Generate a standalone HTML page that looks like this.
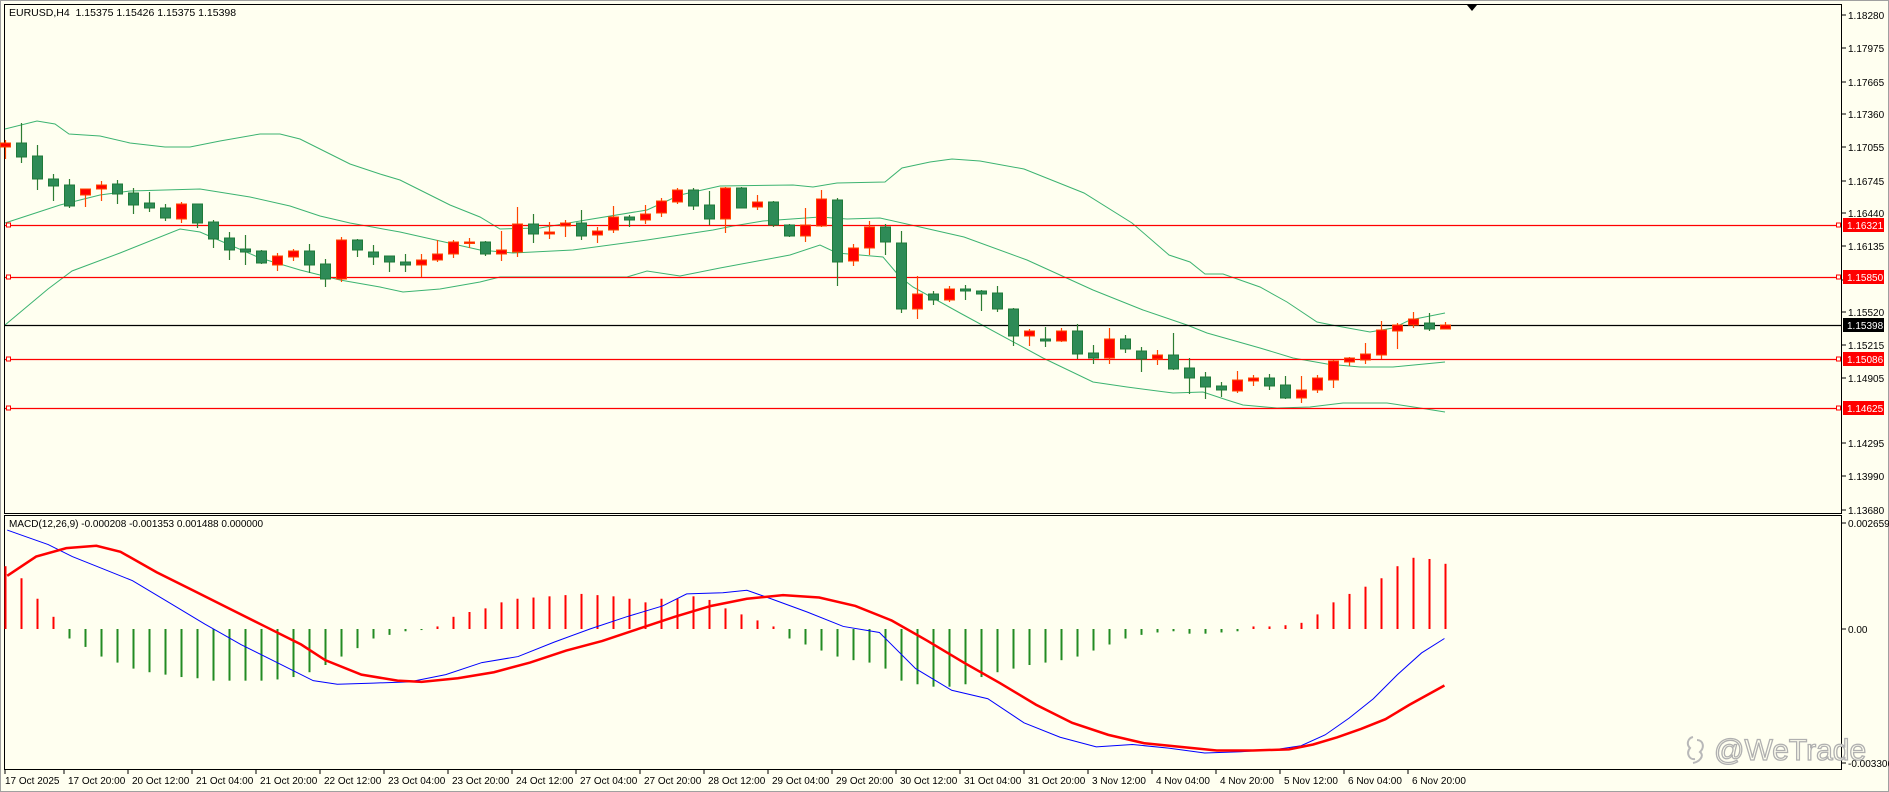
<!DOCTYPE html>
<html><head><meta charset="utf-8"><style>
html,body{margin:0;padding:0;background:#fffff0;}
svg{display:block;font-family:"Liberation Sans",sans-serif;}
</style></head><body>
<svg id="s" width="1889" height="792" viewBox="0 0 1889 792" xmlns="http://www.w3.org/2000/svg">
<rect x="0" y="0" width="1889" height="792" fill="#fffff0"/>
<rect x="0.5" y="0.5" width="1888" height="791" fill="none" stroke="#a0a0a0"/>
<rect x="4.5" y="4.5" width="1837" height="509" fill="none" stroke="#000"/>
<rect x="4.5" y="515.5" width="1837" height="254" fill="none" stroke="#000"/>
<g id="bands" fill="none" stroke="#3cb371" stroke-width="1"></g>
<g id="hl"></g>
<g id="cand"></g>
<g id="macd"></g>
<g id="axis" font-size="10" fill="#000"></g>
<text x="9" y="16" font-size="10.5" fill="#000">EURUSD,H4&#160; 1.15375 1.15426 1.15375 1.15398</text>
<text x="9" y="527" font-size="10" fill="#000">MACD(12,26,9) -0.000208 -0.001353 0.001488 0.000000</text>
<polygon points="1467,5 1477,5 1472,11" fill="#000"/>
<g transform="translate(1684,733)" fill="none" stroke="#b8b8b8" stroke-width="2">
<path d="M9 4 C4 5 2 11 6 15 C2 20 5 27 11 26 M13 7 C19 7 21 14 16 19 C21 23 15 29 9 30"/>
</g>
<text x="1714" y="760" font-size="30" fill="#fffff0" stroke="#b0b0b0" stroke-width="1.3">@WeTrade</text>
</svg>
<script>
var NS="http://www.w3.org/2000/svg";
function el(p,t,a,txt){var e=document.createElementNS(NS,t);for(var k in a)e.setAttribute(k,a[k]);if(txt!=null)e.textContent=txt;document.getElementById(p).appendChild(e);return e;}
var C=[[147,143,140,159],[143,157,123,163],[156,179,145,190],[179,186,174,201],[185,206,179,208],[195,189,189,207],[189,185,181,201],[184,194,180,204],[193,205,188,214],[203,208,192,212],
[208,218,204,221],[219,204,202,223],[204,223,204,228],[222,239,220,248],[238,250,232,260],[249,252,235,265],[251,263,250,264],[265,256,253,271],[257,251,249,261],[251,265,244,273],
[264,279,259,287],[279,240,237,282],[240,250,239,257],[252,257,245,265],[256,262,256,272],[262,265,254,272],[265,260,254,277],[260,254,240,262],[254,242,240,258],[243,242,238,248],
[242,254,241,256],[254,250,231,261],[252,224,207,257],[224,234,214,243],[234,232,222,239],[226,223,220,237],[223,236,210,240],[235,231,227,243],[230,217,206,233],[217,220,215,227],
[220,214,205,224],[213,201,198,217],[202,190,188,204],[190,206,188,210],[205,219,191,225],[219,188,187,233],[188,208,187,208],[207,202,195,210],[202,225,201,227],[225,236,224,237],
[236,225,208,242],[226,199,190,227],[200,262,198,286],[261,248,244,266],[248,227,221,255],[227,242,224,255],[243,309,231,313],[309,294,276,319],[294,300,291,305],[300,289,286,302],
[289,291,285,300],[291,294,290,311],[293,309,286,312],[309,336,308,346],[336,331,329,346],[339,341,327,347],[341,331,328,342],[331,354,324,359],[353,358,345,364],[358,339,328,364],
[339,349,335,353],[351,359,347,372],[359,355,350,365],[355,369,333,370],[368,378,358,394],[377,387,372,399],[386,390,382,397],[391,380,371,393],[381,378,375,386],[378,386,374,390],
[385,398,376,399],[398,390,376,403],[390,378,375,393],[380,361,360,388],[362,358,357,366],[360,354,343,364],[355,330,321,359],[331,325,323,349],[325,319,312,328],[323,329,313,331],
[329,325,322,329]];
C.forEach(function(c,i){var x=5+16*i;var up=c[1]<c[0];var col=up?"#ff0000":"#2e8b57";var sc=up?"#ff4500":"#1f7a3a";
el("cand","line",{x1:x+0.5,x2:x+0.5,y1:c[2],y2:c[3],stroke:up?"#ff4500":"#2e7d32","stroke-width":1.2});
var t=Math.min(c[0],c[1]),h=Math.max(1.5,Math.abs(c[1]-c[0]));
el("cand","rect",{x:x-4.5,y:t,width:10,height:h,fill:col,stroke:sc,"stroke-width":1});});
function poly(p,pts,st,sw){el(p,"polyline",{points:pts.map(function(q){return q.join(",")}).join(" "),fill:"none",stroke:st,"stroke-width":sw});}
poly("bands",[[5,129],[37,121],[55,124],[69,134],[100,136],[130,143],[165,147],[190,147],[220,141],[260,134],[280,134],[300,139],[330,154],[350,164],[380,174],[400,180],[420,190],[450,205],[480,217],[500,229],[540,228],[580,221],[647,210],[680,195],[720,186],[793,185],[813,187],[837,183],[885,182],[902,168],[930,162],[952,159],[980,161],[1024,169],[1084,193],[1132,223],[1169,255],[1190,262],[1205,274],[1223,274],[1260,287],[1287,302],[1317,322],[1337,326],[1370,332],[1393,328],[1410,320],[1445,313]],"#3cb371",1);
poly("bands",[[5,223],[60,205],[100,195],[130,191],[200,189],[250,197],[290,206],[320,216],[350,223],[400,232],[440,241],[480,250],[513,253],[573,250],[647,240],[713,230],[733,226],[763,221],[820,217],[847,219],[880,218],[920,227],[964,237],[1027,260],[1093,290],[1143,310],[1187,325],[1207,333],[1260,348],[1293,358],[1327,364],[1360,367],[1393,367],[1445,362]],"#3cb371",1);
poly("bands",[[5,325],[48,289],[72,271],[120,253],[180,229],[200,232],[230,245],[260,258],[300,270],[340,280],[380,287],[403,292],[440,289],[480,282],[500,277],[627,277],[647,271],[680,276],[720,268],[790,255],[820,245],[837,253],[883,257],[900,277],[913,287],[960,313],[1043,358],[1093,382],[1127,387],[1173,393],[1203,392],[1227,400],[1243,405],[1277,408],[1310,407],[1343,403],[1387,403],[1420,408],[1445,412]],"#3cb371",1);
[[225,"#ff0000","1.16321"],[277,"#ff0000","1.15850"],[359,"#ff0000","1.15086"],[408,"#ff0000","1.14625"]].forEach(function(h){
el("hl","line",{x1:5,x2:1841,y1:h[0]+0.5,y2:h[0]+0.5,stroke:h[1],"stroke-width":1.3});
el("hl","rect",{x:6.5,y:h[0]-2,width:4,height:4,fill:"#fffff0",stroke:h[1]});
el("hl","rect",{x:1836.5,y:h[0]-2,width:4,height:4,fill:"#fffff0",stroke:h[1]});});
el("hl","line",{x1:5,x2:1841,y1:325.5,y2:325.5,stroke:"#000","stroke-width":1.2});
var P=[["1.18280",15],["1.17975",48],["1.17665",82],["1.17360",114],["1.17055",147],["1.16745",181],["1.16440",213],["1.16135",246],["1.15825",280],["1.15520",312],["1.15215",345],["1.14905",378],["1.14295",443],["1.13990",476],["1.13680",510]];
P.forEach(function(p){el("axis","line",{x1:1841,x2:1846,y1:p[1],y2:p[1],stroke:"#000"});el("axis","text",{x:1848,y:p[1]+4},p[0]);});
[[225,"#ff0000","1.16321"],[277,"#ff0000","1.15850"],[325,"#000","1.15398"],[359,"#ff0000","1.15086"],[408,"#ff0000","1.14625"]].forEach(function(t){
el("axis","rect",{x:1843,y:t[0]-7,width:41,height:14,fill:t[1]});el("axis","text",{x:1847,y:t[0]+4,fill:"#fff"},t[2]);});
[["0.002659",523],["0.00",629],["-0.003306",763]].forEach(function(p){el("axis","line",{x1:1841,x2:1846,y1:p[1],y2:p[1],stroke:"#000"});el("axis","text",{x:1848,y:p[1]+4},p[0]);});
var T=["17 Oct 2025","17 Oct 20:00","20 Oct 12:00","21 Oct 04:00","21 Oct 20:00","22 Oct 12:00","23 Oct 04:00","23 Oct 20:00","24 Oct 12:00","27 Oct 04:00","27 Oct 20:00","28 Oct 12:00","29 Oct 04:00","29 Oct 20:00","30 Oct 12:00","31 Oct 04:00","31 Oct 20:00","3 Nov 12:00","4 Nov 04:00","4 Nov 20:00","5 Nov 12:00","6 Nov 04:00","6 Nov 20:00"];
T.forEach(function(t,k){var x=k==0?5:1408-64*(22-k);el("axis","line",{x1:x,x2:x,y1:769,y2:774,stroke:"#000"});el("axis","text",{x:k==0?5:x+4,y:784},t);});
var H=[470,480,497,512,530,537,545,550,555,558,560,562,563,565,565,565,565,564,562,558,552,545,538,530,527,524,523,520,512,508,505,500,497,496,495,494,493,494,495,497,500,497,497,495,498,505,510,515,520,530,535,540,545,548,550,555,565,568,570,570,568,562,558,555,552,550,548,545,540,535,530,527,525,524,526,526,525,524,520,520,519,517,510,500,493,487,480,470,463,464,468];
var S=1.2047;
H.forEach(function(v,i){var x=5+16*i+0.5;var y=v*S;var z=629;var col=y<z?"#ff0000":"#228b22";el("macd","line",{x1:x,x2:x,y1:z,y2:y,stroke:col,"stroke-width":2});});
function sp(a){return a.map(function(q){return [q[0]*S,q[1]*S]});}
poly("macd",sp([[6,440],[20,445],[40,452],[60,462],[80,470],[110,482],[140,500],[170,518],[200,535],[230,550],[260,565],[280,568],[310,567],[340,566],[370,560],[400,550],[430,545],[460,533],[490,522],[520,512],[550,503],[570,493],[600,492],[620,490],[640,497],[670,508],[700,520],[730,525],[760,555],[790,573],[820,580],[850,600],[880,612],[910,620],[940,618],[970,621],[1000,625],[1030,624],[1060,622],[1080,619],[1100,610],[1120,596],[1140,580],[1160,560],[1180,542],[1199,530]]),"#0000ff",1);
poly("macd",sp([[6,478],[30,462],[55,455],[80,453],[100,458],[130,475],[160,490],[190,505],[220,520],[250,535],[270,548],[300,560],[330,565],[350,566],[380,563],[410,558],[440,550],[470,540],[500,532],[530,522],[560,512],[590,503],[620,497],[650,494],[680,496],[710,503],[740,515],[770,532],[800,550],[830,567],[860,585],[890,600],[920,610],[950,617],[980,620],[1010,623],[1040,623],[1070,622],[1090,618],[1110,612],[1130,605],[1150,597],[1170,585],[1199,569]]),"#ff0000",2.5);
</script>
</body></html>
